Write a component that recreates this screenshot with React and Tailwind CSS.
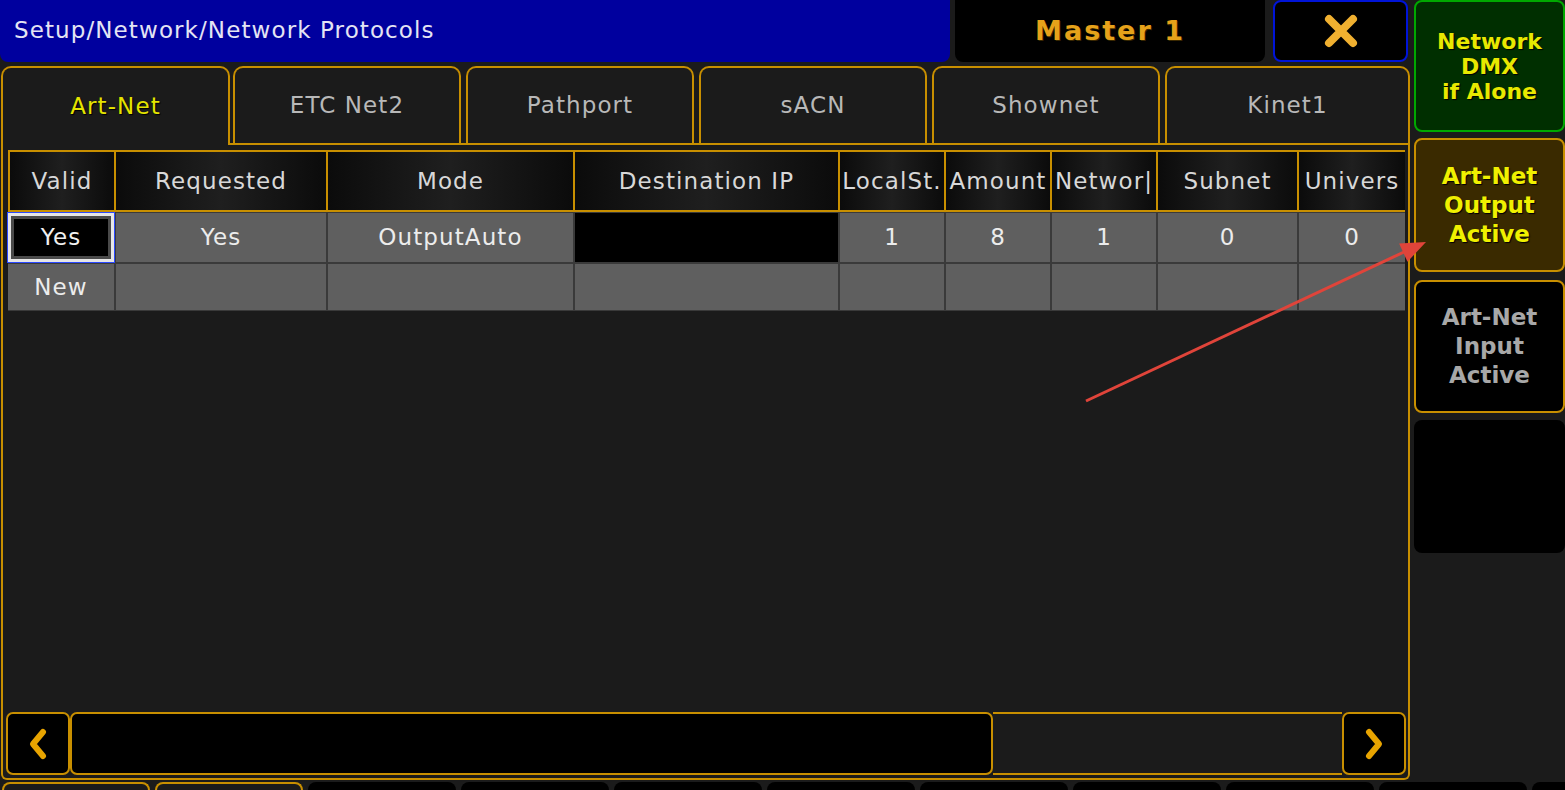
import React from "react";

const OR = "border-[#c88f00]";

function Chevron({ dir }) {
  const pts = dir === "left" ? "16,6 6,18 16,30" : "6,6 16,18 6,30";
  return (
    <svg width="22" height="36" viewBox="0 0 22 36">
      <polyline points={pts} fill="none" stroke="#e8a400" strokeWidth="6" strokeLinecap="round" strokeLinejoin="round" />
    </svg>
  );
}

function HeadCell({ children }) {
  return (
    <div className="h-full overflow-hidden whitespace-nowrap text-center leading-[58px] text-[#d8d8d8] bg-[linear-gradient(90deg,#0b0b0b,#1f1f1f_50%,#0b0b0b)]">
      {children}
    </div>
  );
}

function Cell({ children }) {
  return (
    <div className="h-full overflow-hidden whitespace-nowrap text-center bg-[#5f5f5f] text-[#ececec] flex items-center justify-center">
      {children}
    </div>
  );
}

export default function App() {
  const headers = ["Valid", "Requested", "Mode", "Destination IP", "LocalSt.", "Amount", "Networ|", "Subnet", "Univers"];
  const tabs = ["ETC Net2", "Pathport", "sACN", "Shownet", "Kinet1"];
  return (
    <div className="relative w-[1565px] h-[790px] overflow-hidden bg-[#1b1b1b] flex flex-col font-['DejaVu_Sans',sans-serif] text-[23px] tracking-[1.1px]">
      <div className="h-[782px] flex">
        {/* left */}
        <div className="w-[1410px] flex flex-col">
          <div className="h-[62px] flex">
            <div className="w-[950px] bg-[#00009e] rounded-b-[8px] flex items-center pl-[14px] pb-[2px] text-[#e4e4f4]">
              Setup/Network/Network Protocols
            </div>
            <div className="ml-[5px] w-[310px] bg-black rounded-b-[8px] flex items-center justify-center font-bold text-[27px] tracking-[2px] text-[#e6a21a] [text-shadow:1px_1px_0_#3a2800]">
              Master 1
            </div>
            <div className="ml-[8px] w-[135px] bg-black border-2 border-[#0014d8] rounded-[8px] flex items-center justify-center">
              <svg width="40" height="40" viewBox="0 0 40 40">
                <path d="M8 8 L32 32 M32 8 L8 32" stroke="#f0b030" strokeWidth="8" strokeLinecap="round" />
              </svg>
            </div>
          </div>

          <div className="mt-[4px] ml-[1px] h-[714px] flex flex-col">
            <div className="h-[79px] flex">
              <div className={"w-[229px] border-l-2 border-t-2 border-r-2 rounded-t-[10px] flex items-center justify-center text-[#e4e400] [text-shadow:1px_1px_1px_#000] " + OR}>
                Art-Net
              </div>
              <div className={"flex-1 flex gap-[5px] pl-[3px] border-b-2 " + OR}>
                {tabs.map((t, i) => (
                  <div
                    key={t}
                    className={
                      (i === 4 ? "flex-1 " : "w-[228px] ") +
                      "border-l-2 border-t-2 border-r-2 rounded-t-[10px] flex items-center justify-center text-[#b8b8b8] " +
                      OR
                    }
                  >
                    {t}
                  </div>
                ))}
              </div>
            </div>

            <div className={"flex-1 border-l-2 border-r-2 border-b-2 rounded-b-[6px] flex flex-col pt-[5px] pb-[3px] " + OR}>
              <div className="ml-[5px] w-[1397px] flex flex-col">
                <div className="grid h-[62px] bg-[#c88f00] py-[2px] pl-[2px] gap-x-[2px] grid-cols-[104px_210px_245px_263px_104px_104px_104px_139px_106px]">
                  {headers.map((h) => (
                    <HeadCell key={h}>{h}</HeadCell>
                  ))}
                </div>
                <div className="grid bg-[#3a3a3a] pt-[1px] pb-[1px] gap-x-[2px] gap-y-[2px] grid-rows-[49px_46px] grid-cols-[106px_210px_245px_263px_104px_104px_104px_139px_106px]">
                  <div className="h-full ring-1 ring-[#2a48ff] border-[3px] border-[#e6e6e6] bg-black shadow-[inset_0_0_0_3px_#4a4a4a] flex items-center justify-center text-[#f0f0f0]">
                    Yes
                  </div>
                  <Cell>Yes</Cell>
                  <Cell>OutputAuto</Cell>
                  <div className="h-full bg-black" />
                  <Cell>1</Cell>
                  <Cell>8</Cell>
                  <Cell>1</Cell>
                  <Cell>0</Cell>
                  <Cell>0</Cell>
                  <Cell>New</Cell>
                  <Cell />
                  <Cell />
                  <Cell />
                  <Cell />
                  <Cell />
                  <Cell />
                  <Cell />
                  <Cell />
                </div>
              </div>

              <div className="flex-1" />

              <div className="ml-[3px] w-[1400px] h-[63px] flex">
                <div className={"w-[64px] bg-black border-2 rounded-[7px] flex items-center justify-center " + OR}>
                  <Chevron dir="left" />
                </div>
                <div className={"w-[923px] bg-black border-2 rounded-[7px] " + OR} />
                <div className={"flex-1 border-y-2 " + OR} />
                <div className={"w-[64px] bg-black border-2 rounded-[7px] flex items-center justify-center " + OR}>
                  <Chevron dir="right" />
                </div>
              </div>
            </div>
          </div>
        </div>

        {/* right */}
        <div className="ml-[4px] w-[151px] flex flex-col font-bold tracking-normal">
          <div className="h-[132px] bg-[#002f00] border-2 border-[#00a800] rounded-[8px] flex items-center justify-center text-center text-[22px] leading-[25px] text-[#e8e800] [text-shadow:1px_1px_1px_#000]">
            Network<br />DMX<br />if Alone
          </div>
          <div className="mt-[6px] h-[134px] bg-[#3a2a00] border-2 border-[#c88f00] rounded-[8px] flex items-center justify-center text-center text-[23px] leading-[29px] text-[#f0f000] [text-shadow:1px_1px_1px_#000]">
            Art-Net<br />Output<br />Active
          </div>
          <div className="mt-[8px] h-[133px] bg-black border-2 border-[#c88f00] rounded-[8px] flex items-center justify-center text-center text-[23px] leading-[29px] text-[#a8a8a8]">
            Art-Net<br />Input<br />Active
          </div>
          <div className="mt-[7px] h-[133px] bg-black rounded-[8px]" />
        </div>
      </div>

      {/* bottom tab strip */}
      <div className="mt-[2px] ml-[2px] flex gap-[5px] h-[20px]">
        {Array.from({ length: 11 }).map((_, i) => (
          <div
            key={i}
            className={
              "w-[148px] shrink-0 rounded-t-[8px] " +
              (i < 2 ? "border-l-2 border-t-2 border-r-2 border-[#c88f00] bg-[#1b1b1b]" : "bg-black")
            }
          />
        ))}
      </div>

      {/* annotation arrow */}
      <svg className="absolute left-0 top-0 pointer-events-none" width="1565" height="790" viewBox="0 0 1565 790">
        <line x1="1086" y1="401" x2="1404" y2="252" stroke="#e0443a" strokeWidth="3" />
        <polygon points="1426,242 1407.5,261.7 1399.1,243.5" fill="#e0443a" />
      </svg>
    </div>
  );
}
